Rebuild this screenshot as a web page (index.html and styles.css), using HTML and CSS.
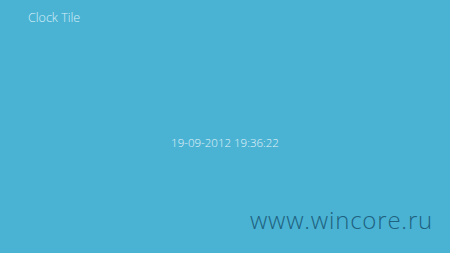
FILE: index.html
```html
<!DOCTYPE html>
<html>
<head>
<meta charset="utf-8">
<link rel="stylesheet" href="styles.css">
</head>
<body>
<div class="screen">
  <header class="title">Clock Tile</header>
  <main class="clock">19-09-2012 19:36:22</main>
  <footer class="mark">www.wincore.ru</footer>
</div>
</body>
</html>
```
FILE: styles.css
```css
html, body {
  margin: 0;
  padding: 0;
  width: 450px;
  height: 253px;
  overflow: hidden;
  background: #4ab3d4;
}
.screen {
  width: 450px;
  height: 253px;
  display: flex;
  flex-direction: column;
  font-family: "Open Sans", "Noto Sans", sans-serif;
  font-weight: 300;
}
.title {
  color: #d6eef6;
  font-size: 12.5px;
  line-height: 14px;
  padding: 11px 0 0 28px;
}
.clock {
  color: #e2f2f8;
  font-size: 11.5px;
  line-height: 14px;
  text-align: center;
  padding-top: 111px;
}
.mark {
  color: #1f6280;
  font-size: 24px;
  line-height: 28px;
  text-align: right;
  padding: 56px 17px 0 0;
  letter-spacing: 0.8px;
}
```
